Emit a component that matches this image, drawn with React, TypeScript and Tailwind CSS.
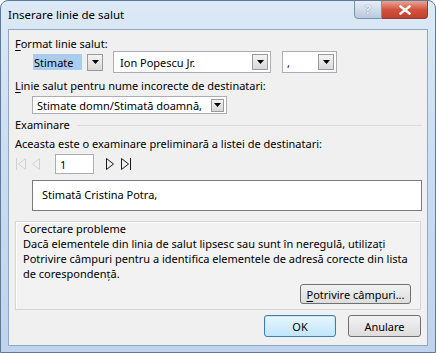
import { useState } from "react";

const DropArrow = ({ className = "" }: { className?: string }) => (
	<div
		className={`shrink-0 flex items-center justify-center border border-[#9a9a9a] bg-gradient-to-b from-[#f4f4f4] to-[#d8d8d8] ${className}`}
	>
		<svg width="7" height="4" viewBox="0 0 7 4">
			<path d="M0 0h7L3.5 4z" fill="#000" />
		</svg>
	</div>
);

const Combo = ({
	value,
	className = "",
	arrow = "w-[16px] h-[16px]",
}: {
	value: string;
	className?: string;
	arrow?: string;
}) => (
	<div
		className={`flex items-center border border-[#abadb3] bg-white pr-[2px] ${className}`}
	>
		<span className="flex-1 whitespace-nowrap leading-[15px]">{value}</span>
		<DropArrow className={arrow} />
	</div>
);

const NavIcon = ({
	kind,
	disabled,
}: {
	kind: "first" | "prev" | "next" | "last";
	disabled?: boolean;
}) => {
	const c = disabled ? "#d0d0d0" : "#1a1a1a";
	return (
		<svg width="12" height="14" viewBox="0 0 12 14" className="shrink-0">
			{kind === "first" && (
				<>
					<path d="M1.5 1v12" stroke={c} />
					<path d="M10.5 1.5L3.5 7l7 5.5z" stroke={c} fill="none" />
				</>
			)}
			{kind === "prev" && (
				<path d="M9.5 1.5L2.5 7l7 5.5z" stroke={c} fill="none" />
			)}
			{kind === "next" && (
				<path d="M2.5 1.5L9.5 7l-7 5.5z" stroke={c} fill="none" />
			)}
			{kind === "last" && (
				<>
					<path d="M1.5 1.5L8.5 7l-7 5.5z" stroke={c} fill="none" />
					<path d="M10.5 1v12" stroke={c} />
				</>
			)}
		</svg>
	);
};

export default function App() {
	const [page] = useState("1");

	return (
		<div className="w-[436px] h-[353px] flex flex-col relative overflow-hidden rounded-t-[8px] border border-[#5f7a99] bg-gradient-to-b from-[#dce9f7] via-[#c9dcf0] to-[#bfd4ec] font-['Noto_Sans',sans-serif] text-[11px] text-black">
			{/* title bar */}
			<div className="h-[28px] shrink-0 flex items-center pl-[7px] pb-[1px] text-[11.5px] text-black">
				Inserare linie de salut
			</div>
			<div className="absolute top-[-1px] right-[7px] flex">
				<div className="w-[28px] h-[19px] flex items-center justify-center rounded-bl-[4px] border border-[#7b93ad] bg-gradient-to-b from-[#e6eef7] to-[#b9cadd] text-[13px] font-bold text-[#eef3f9] [text-shadow:0_0_1px_#4a6078]">
					?
				</div>
				<div className="w-[46px] h-[19px] flex items-center justify-center rounded-br-[4px] border border-l-0 border-[#8c3b33] bg-gradient-to-b from-[#e8a595] via-[#d2523f] to-[#c13f2d]">
					<svg width="12" height="10" viewBox="0 0 12 10">
						<path
							d="M1.5 1.5l9 7M10.5 1.5l-9 7"
							stroke="#fff"
							strokeWidth="2.4"
							strokeLinecap="square"
						/>
					</svg>
				</div>
			</div>

			{/* client area */}
			<div className="flex-1 mx-[7px] mb-[6px] flex flex-col border border-[#8fa8c3] bg-[#f0f0f0] pl-[6px] pr-[5px] pt-[6px]">
				<div className="h-[15px] leading-[15px]">
					<span className="underline underline-offset-2">F</span>ormat
					linie salut:
				</div>

				<div className="flex items-center ml-[18px] h-[22px]">
					<div className="w-[70px] h-[22px] flex items-center gap-[5px]">
						<span className="w-[49px] h-[16px] flex items-center bg-[#a9cdf0] pl-[1px] leading-[15px]">
							Stimate
						</span>
						<DropArrow className="w-[16px] h-[17px]" />
					</div>
					<Combo
						value="Ion Popescu Jr."
						className="ml-[10px] w-[158px] h-[22px] pl-[6px]"
					/>
					<Combo
						value=","
						className="ml-[11px] w-[55px] h-[22px] pl-[4px]"
					/>
				</div>

				<div className="h-[15px] leading-[15px] mt-[5px]">
					<span className="underline underline-offset-2">L</span>inie
					salut pentru nume incorecte de destinatari:
				</div>

				<Combo
					value="Stimate domn/Stimată doamnă,"
					className="ml-[17px] mt-[3px] w-[195px] h-[18px] pl-[4px]"
					arrow="w-[13px] h-[13px]"
				/>

				<div className="flex items-center gap-[7px] h-[15px] mt-[3px]">
					<span className="leading-[15px]">Examinare</span>
					<div className="flex-1 h-0 border-t border-[#dcdcdc] mt-[1px]" />
				</div>

				<div className="h-[15px] leading-[15px] mt-[4px]">
					Aceasta este o examinare preliminară a listei de destinatari:
				</div>

				<div className="flex items-center h-[20px] mt-[3px]">
					<div className="flex items-center gap-[3px]">
						<NavIcon kind="first" disabled />
						<NavIcon kind="prev" disabled />
					</div>
					<div className="ml-[13px] w-[39px] h-[20px] flex items-center border border-[#abadb3] bg-white pl-[4px] leading-[15px]">
						{page}
					</div>
					<div className="ml-[10px] flex items-center gap-[4px]">
						<NavIcon kind="next" />
						<NavIcon kind="last" />
					</div>
				</div>

				<div className="ml-[17px] mt-[6px] h-[31px] flex items-center border border-[#7a7a7a] bg-white pl-[9px]">
					Stimată Cristina Potra,
				</div>

				<div className="mt-[10px] mr-[1px] h-[89px] flex flex-col border border-[#d5d5d5] bg-[#f2f2f2] shadow-[inset_1px_1px_0_#ffffff] pl-[7px] pr-[9px]">
					<div className="h-[13px] leading-[13px]">Corectare probleme</div>
					<div className="mt-[1px] leading-[15px] whitespace-nowrap">
						Dacă elementele din linia de salut lipsesc sau sunt în neregulă,
						utilizați
						<br />
						Potrivire câmpuri pentru a identifica elementele de adresă
						corecte din lista
						<br />
						de corespondență.
					</div>
					<div className="flex justify-end mt-[3px]">
						<button className="w-[111px] h-[20px] flex items-center justify-center rounded-[3px] border border-[#707070] bg-gradient-to-b from-[#f2f2f2] to-[#dddddd] text-[11px] leading-none">
							<span className="underline underline-offset-2">P</span>
							otrivire câmpuri...
						</button>
					</div>
				</div>

				<div className="flex justify-end gap-[12px] mt-[5px] pr-[1px]">
					<button className="w-[72px] h-[22px] flex items-center justify-center rounded-[3px] border border-[#3c7fb1] bg-gradient-to-b from-[#eaf6fd] to-[#bee6fd] shadow-[inset_0_0_0_1px_#c4e5f6] text-[11px] leading-none">
						OK
					</button>
					<button className="w-[73px] h-[22px] flex items-center justify-center rounded-[3px] border border-[#707070] bg-gradient-to-b from-[#f2f2f2] to-[#dddddd] text-[11px] leading-none">
						Anulare
					</button>
				</div>
			</div>
		</div>
	);
}
